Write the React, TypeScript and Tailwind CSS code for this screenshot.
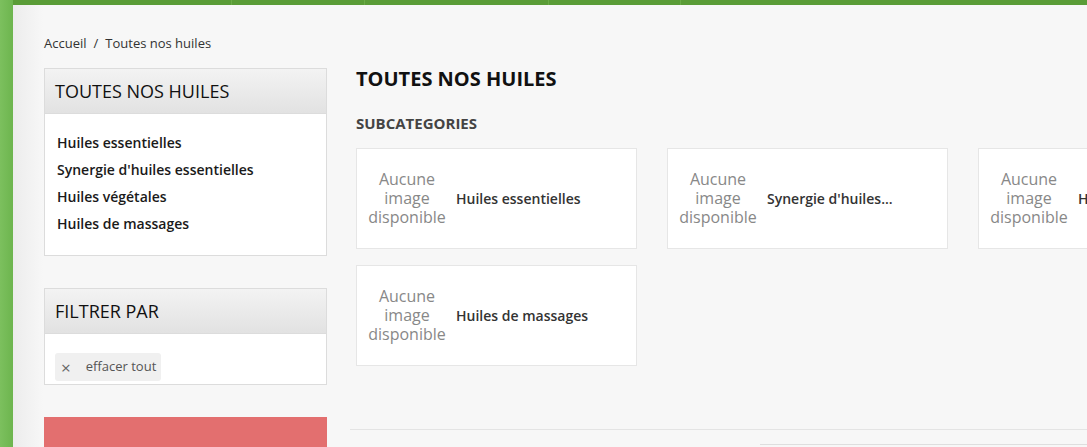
const sideLinks = [
  'Huiles essentielles',
  "Synergie d'huiles essentielles",
  'Huiles végétales',
  'Huiles de massages',
];

const subcats = [
  'Huiles essentielles',
  "Synergie d'huiles essentielles",
  'Huiles végétales',
  'Huiles de massages',
];

// the shop cuts long names on a word, like the server does
const shorten = (s: string, max = 20) => {
  if (s.length <= max) return s;
  const cut = s.slice(0, max);
  return cut.slice(0, cut.lastIndexOf(' ')) + '...';
};

const SideBlock = ({ title, children }: { title: string; children: React.ReactNode }) => (
  <div className="border border-[#dcdcdc] bg-white">
    <div className="h-[45px] flex items-center px-[10px] bg-gradient-to-b from-[#f3f3f3] to-[#e2e2e2] border-b border-[#dcdcdc]">
      <h2 className="text-[18px] text-[#111] uppercase">{title}</h2>
    </div>
    {children}
  </div>
);

const SubcatCard = ({ name }: { name: string }) => (
  <div className="w-[281px] h-[101px] shrink-0 bg-white border border-[#e6e6e6] flex items-center">
    <div className="w-[99px] shrink-0 text-center text-[16px] leading-[19px] text-[#888] pl-[10px] pr-[9px] -mt-[1px]">
      Aucune image disponible
    </div>
    <div className="min-w-0 text-[14px] font-semibold text-[#333] whitespace-nowrap -mt-[1px]">{shorten(name)}</div>
  </div>
);

export default function App() {
  return (
    <div className="w-[1087px] h-[447px] overflow-hidden flex bg-[#78bd5b] font-['Open_Sans','Liberation_Sans',sans-serif]">
      <div className="w-[13px] shrink-0 bg-gradient-to-r from-[#7cc05e] to-[#6db54e]" />
      <div className="flex-1 flex flex-col min-w-0">
        <div className="h-[5px] shrink-0 bg-[#5a9c37] flex">
          <div className="w-[219px] border-r border-[#6aab47]" />
          <div className="w-[133px] border-r border-[#6aab47]" />
          <div className="w-[184px] border-r border-[#6aab47]" />
          <div className="w-[132px] border-r border-[#6aab47]" />
        </div>
        <div className="flex-1 relative bg-[#f7f7f7] pl-[31px] pt-[30px] overflow-hidden">
          <div className="absolute left-0 top-0 bottom-0 w-[30px] bg-gradient-to-r from-[#ececec] to-[#f7f7f7]" />
          <div className="relative">
            <nav className="text-[13px] text-[#333] h-[17px] flex items-center gap-[7px]">
              <span>Accueil</span>
              <span>/</span>
              <span>Toutes nos huiles</span>
            </nav>
            <div className="flex mt-[16px] gap-[29px]">
              <aside className="w-[283px] shrink-0 flex flex-col gap-[32px]">
                <SideBlock title="Toutes nos huiles">
                  <ul className="pt-[15px] pb-[18px] px-[12px] flex flex-col">
                    {sideLinks.map((l) => (
                      <li key={l} className="h-[27px] flex items-center text-[14px] text-[#1a1a1a] font-semibold">
                        {l}
                      </li>
                    ))}
                  </ul>
                </SideBlock>
                <SideBlock title="Filtrer par">
                  <div className="px-[10px] pt-[19px] pb-[3px]">
                    <div className="inline-flex items-center h-[28px] bg-[#f0f0f0] rounded-[3px] pl-[6px] pr-[5px] text-[13px] text-[#555]">
                      <span className="text-[17px] leading-none mr-[15px] text-[#666]">×</span>
                      effacer tout
                    </div>
                  </div>
                </SideBlock>
                <div className="h-[40px] bg-[#e36f6f]" />
              </aside>
              <main className="flex-1 min-w-0">
                <h1 className="text-[20px] font-bold text-[#111] uppercase h-[22px] flex items-center">
                  Toutes nos huiles
                </h1>
                <h2 className="text-[15px] font-bold text-[#444] uppercase mt-[24px] h-[18px] flex items-center">
                  Subcategories
                </h2>
                <div className="mt-[16px] flex flex-wrap gap-x-[30px] gap-y-[16px] w-[950px]">
                  {subcats.map((s) => (
                    <SubcatCard key={s} name={s} />
                  ))}
                </div>
                <div className="mt-[63px] border-t border-[#e4e4e4] -ml-[6px]" />
                <div className="mt-[14px] ml-[404px] border-t border-[#dedede]" />
              </main>
            </div>
          </div>
        </div>
      </div>
    </div>
  );
}
